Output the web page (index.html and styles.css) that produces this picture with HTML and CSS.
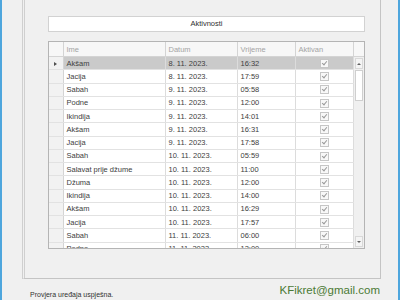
FILE: index.html
```html
<!DOCTYPE html>
<html lang="bs">
<head>
    <meta charset="UTF-8">
    <title>Aktivnosti</title>
    <link rel="stylesheet" href="styles.css">
</head>
<body>
    <div class="window">
        <div class="group">
            <div class="title-box">Aktivnosti</div>
            <div class="grid">
                <table class="cells">
                    <colgroup>
                        <col class="col-head"><col class="col-ime"><col class="col-datum"><col class="col-vrijeme"><col class="col-aktivan">
                    </colgroup>
                    <thead>
                        <tr><th></th><th>Ime</th><th>Datum</th><th>Vrijeme</th><th>Aktivan</th></tr>
                    </thead>
                    <tbody>
                        <tr class="selected"><td class="row-head"><span class="caret"></span></td><td>Akšam</td><td>8. 11. 2023.</td><td>16:32</td><td class="chk"><span class="check"></span></td></tr>
                        <tr><td class="row-head"></td><td>Jacija</td><td>8. 11. 2023.</td><td>17:59</td><td class="chk"><span class="check"></span></td></tr>
                        <tr><td class="row-head"></td><td>Sabah</td><td>9. 11. 2023.</td><td>05:58</td><td class="chk"><span class="check"></span></td></tr>
                        <tr><td class="row-head"></td><td>Podne</td><td>9. 11. 2023.</td><td>12:00</td><td class="chk"><span class="check"></span></td></tr>
                        <tr><td class="row-head"></td><td>Ikindija</td><td>9. 11. 2023.</td><td>14:01</td><td class="chk"><span class="check"></span></td></tr>
                        <tr><td class="row-head"></td><td>Akšam</td><td>9. 11. 2023.</td><td>16:31</td><td class="chk"><span class="check"></span></td></tr>
                        <tr><td class="row-head"></td><td>Jacija</td><td>9. 11. 2023.</td><td>17:58</td><td class="chk"><span class="check"></span></td></tr>
                        <tr><td class="row-head"></td><td>Sabah</td><td>10. 11. 2023.</td><td>05:59</td><td class="chk"><span class="check"></span></td></tr>
                        <tr><td class="row-head"></td><td>Salavat prije džume</td><td>10. 11. 2023.</td><td>11:00</td><td class="chk"><span class="check"></span></td></tr>
                        <tr><td class="row-head"></td><td>Džuma</td><td>10. 11. 2023.</td><td>12:00</td><td class="chk"><span class="check"></span></td></tr>
                        <tr><td class="row-head"></td><td>Ikindija</td><td>10. 11. 2023.</td><td>14:00</td><td class="chk"><span class="check"></span></td></tr>
                        <tr><td class="row-head"></td><td>Akšam</td><td>10. 11. 2023.</td><td>16:29</td><td class="chk"><span class="check"></span></td></tr>
                        <tr><td class="row-head"></td><td>Jacija</td><td>10. 11. 2023.</td><td>17:57</td><td class="chk"><span class="check"></span></td></tr>
                        <tr><td class="row-head"></td><td>Sabah</td><td>11. 11. 2023.</td><td>06:00</td><td class="chk"><span class="check"></span></td></tr>
                        <tr><td class="row-head"></td><td>Podne</td><td>11. 11. 2023.</td><td>12:00</td><td class="chk"><span class="check"></span></td></tr>
                    </tbody>
                </table>
                <div class="vscroll">
                    <div class="vscroll-head"></div>
                    <div class="vscroll-track">
                        <div class="arrow arrow-up"></div>
                        <div class="thumb"></div>
                        <div class="track-fill"></div>
                        <div class="arrow arrow-down"></div>
                    </div>
                </div>
            </div>
        </div>
        <div class="status">
            <span class="status-text">Provjera uređaja uspješna.</span>
            <span class="email">KFikret@gmail.com</span>
        </div>
    </div>
</body>
</html>
```

FILE: styles.css
```css
body {
    margin: 0;
    background-color: #f0f0f0;
    font-family: "Liberation Sans", Arial, sans-serif;
}
.window {
    width: 400px;
    height: 300px;
    box-sizing: border-box;
    border-left: 2px solid #4ea6dd;
    border-right: 2px solid #4ea6dd;
    display: flex;
    flex-direction: column;
    overflow: hidden;
}
.group {
    margin-left: 20px;
    width: 359px;
    height: 279px;
    box-sizing: border-box;
    border-left: 3px double #cfcfcf;
    border-right: 1px solid #c4c4c4;
    border-bottom: 1px solid #c4c4c4;
    padding: 16px 0 0 23px;
    flex-shrink: 0;
}
.title-box {
    width: 317px;
    height: 16px;
    box-sizing: border-box;
    background-color: #ffffff;
    border: 1px solid #d2d2d2;
    font-size: 7.5px;
    color: #303030;
    text-align: center;
    line-height: 14px;
}
.grid {
    margin-top: 9px;
    width: 317px;
    height: 208px;
    box-sizing: border-box;
    border: 1px solid #b4b4b4;
    background-color: #ffffff;
    display: flex;
    overflow: hidden;
}
.cells {
    width: 304px;
    table-layout: fixed;
    border-collapse: collapse;
    font-size: 7.5px;
    color: #404040;
    flex-shrink: 0;
    align-self: flex-start;
}
.col-head { width: 14px; }
.col-ime { width: 102px; }
.col-datum { width: 72px; }
.col-vrijeme { width: 58px; }
.col-aktivan { width: 58px; }
.cells th {
    height: 14px;
    padding: 0 0 0 3px;
    text-align: left;
    font-weight: normal;
    color: #a4a4a4;
    background-color: #f7f7f7;
    border-right: 1px solid #d4d4d4;
    border-bottom: 1px solid #d4d4d4;
}
.cells td {
    height: 12.25px;
    padding: 0 0 0 3px;
    white-space: nowrap;
    overflow: hidden;
    border-right: 1px solid #dcdcdc;
    border-bottom: 1px solid #e2e2e2;
}
.cells td.row-head {
    background-color: #f2f2f2;
    border-right-color: #d4d4d4;
    padding: 0;
    text-align: center;
}
.cells .selected td {
    background-color: #cacaca;
}
.cells .selected td.row-head {
    background-color: #f2f2f2;
}
.caret {
    display: inline-block;
    width: 0;
    height: 0;
    border-top: 2.5px solid transparent;
    border-bottom: 2.5px solid transparent;
    border-left: 3px solid #505050;
    vertical-align: middle;
}
.cells td.chk {
    text-align: center;
    padding: 0;
}
.check {
    display: inline-block;
    position: relative;
    width: 7px;
    height: 7px;
    border: 1px solid #c6c6c6;
    background-color: #f8f8f8;
    vertical-align: middle;
}
.check::after {
    content: "";
    position: absolute;
    left: 2px;
    top: 0;
    width: 2px;
    height: 4px;
    border-right: 1px solid #9a9a9a;
    border-bottom: 1px solid #9a9a9a;
    transform: rotate(40deg);
}
.vscroll {
    flex: 1;
    display: flex;
    flex-direction: column;
    background-color: #f0f0f0;
}
.vscroll-head {
    height: 14px;
    flex-shrink: 0;
    background-color: #f7f7f7;
    border-bottom: 1px solid #d4d4d4;
}
.vscroll-track {
    flex: 1;
    display: flex;
    flex-direction: column;
    padding: 1px;
}
.arrow {
    height: 9px;
    flex-shrink: 0;
    border: 1px solid #d8d8d8;
    background-color: #f4f4f4;
    display: flex;
    align-items: center;
    justify-content: center;
}
.arrow::after {
    content: "";
    border-left: 2px solid transparent;
    border-right: 2px solid transparent;
}
.arrow-up::after {
    border-bottom: 2px solid #606060;
}
.arrow-down::after {
    border-top: 2px solid #606060;
}
.thumb {
    height: 29px;
    flex-shrink: 0;
    margin-top: 1px;
    border: 1px solid #cfcfcf;
    background-color: #ffffff;
}
.track-fill {
    flex: 1;
}
.status {
    flex: 1;
    display: flex;
    align-items: center;
    justify-content: space-between;
    padding: 0 18px 0 28px;
}
.status-text {
    font-size: 7px;
    color: #303030;
    padding-top: 10px;
}
.email {
    font-size: 11.5px;
    color: #4b7a35;
}
```
